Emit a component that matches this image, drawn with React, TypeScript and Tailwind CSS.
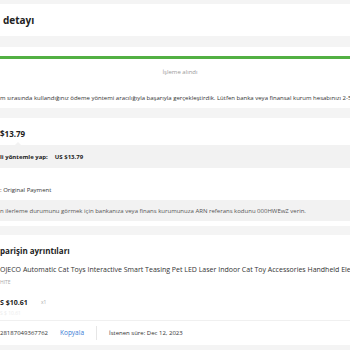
import React from "react";

export default function App() {
  return (
    <div
      className="w-[350px] h-[350px] overflow-hidden bg-[#f4f4f4] text-[#222]"
      style={{ fontFamily: '"Open Sans", "Noto Sans", sans-serif' }}
    >
      <div className="h-[4px]" />
      {/* header */}
      <div className="h-[32px] bg-white flex items-center pl-[3px]">
        <span className="text-[10px] font-bold leading-none whitespace-nowrap">detayı</span>
      </div>
      <div className="h-[11px]" />
      {/* status card */}
      <div className="h-[61px] bg-white flex flex-col overflow-hidden">
        <div className="h-[9px]" />
        <div className="h-[3px] bg-[#52b043]" />
        <div className="h-[10px]" />
        <div className="flex justify-center pl-[10px]">
          <span className="text-[6px] leading-none text-[#9a9a9a] whitespace-nowrap">İşleme alındı</span>
        </div>
        <div className="h-[20px]" />
        <div className="text-[6px] leading-none whitespace-nowrap text-[#333]">
          m sırasında kullandığınız ödeme yöntemi aracılığıyla başarıyla gerçekleştirdik. Lütfen banka veya finansal kurum hesabınızı 2-5 iş günü içinde kontrol edin.
        </div>
      </div>
      <div className="h-[10px]" />
      {/* refund card */}
      <div className="h-[108px] bg-white flex flex-col">
        <div className="h-[12px]" />
        <div className="h-[8px] flex items-center">
          <span className="text-[8px] font-bold leading-none whitespace-nowrap">$13.79</span>
        </div>
        <div className="h-[7px]" />
        <div className="relative h-[23px] bg-[#f2f2f2] flex items-center gap-[7px]">
          <div className="absolute left-[15px] top-[-3px] w-0 h-0 border-l-[3px] border-r-[3px] border-b-[3px] border-l-transparent border-r-transparent border-b-[#f2f2f2]" />
          <span className="text-[6px] font-bold leading-none whitespace-nowrap">li yöntemle yap:</span>
          <span className="text-[6px] font-bold leading-none whitespace-nowrap">US $13.79</span>
        </div>
        <div className="h-[19px]" />
        <div className="h-[6px] flex items-center">
          <span className="text-[6px] leading-none whitespace-nowrap text-[#333]">: Original Payment</span>
        </div>
        <div className="h-[7px]" />
        <div className="h-[21px] bg-[#f2f2f2] flex items-center">
          <span className="text-[6px] leading-none whitespace-nowrap text-[#555]">
            n ilerleme durumunu görmek için bankanıza veya finans kurumunuza ARN referans kodunu 000HWEwZ verin.
          </span>
        </div>
      </div>
      <div className="h-[9px]" />
      {/* order card */}
      <div className="h-[110px] bg-white flex flex-col overflow-hidden">
        <div className="h-[12px]" />
        <div className="h-[8px] flex items-center">
          <span className="text-[8px] font-bold leading-none whitespace-nowrap">parişin ayrıntıları</span>
        </div>
        <div className="h-[11px]" />
        <div className="h-[7px] flex items-center">
          <span className="text-[7px] leading-none whitespace-nowrap text-[#333]">
            OJECO Automatic Cat Toys Interactive Smart Teasing Pet LED Laser Indoor Cat Toy Accessories Handheld Electronic Cat Toy
          </span>
        </div>
        <div className="h-[7px]" />
        <div className="h-[5px] flex items-center">
          <span className="text-[5px] leading-none whitespace-nowrap text-[#aaa]">HITE</span>
        </div>
        <div className="h-[14px]" />
        <div className="h-[7px] flex items-center">
          <span className="text-[7px] font-bold leading-none whitespace-nowrap w-[41px]">S $10.61</span>
          <span className="text-[5px] leading-none text-[#aaa]">x1</span>
        </div>
        <div className="h-[5px]" />
        <div className="h-[4px] flex items-center">
          <span className="text-[5px] leading-none whitespace-nowrap text-[#ececec]">S $ 10.61</span>
        </div>
        <div className="h-[6px] border-b border-[#f0f0f0]" />
        <div className="flex-1 flex items-center">
          <span className="text-[6px] leading-none whitespace-nowrap text-[#333] w-[60px]">28187049367762</span>
          <span className="text-[6.5px] leading-none whitespace-nowrap text-[#3a7bd5] w-[36px]">Kopyala</span>
          <div className="w-px h-[14px] bg-[#e6e6e6] mr-[12px]" />
          <span className="text-[6px] leading-none whitespace-nowrap text-[#333]">İstenen süre: Dec 12, 2023</span>
        </div>
      </div>
    </div>
  );
}
